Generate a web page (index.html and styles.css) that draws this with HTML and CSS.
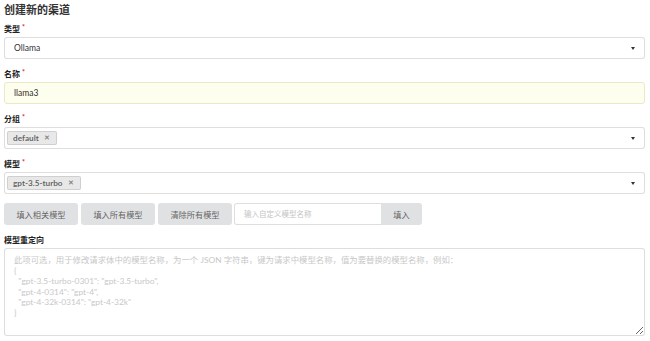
FILE: index.html
```
<!DOCTYPE html>
<html lang="zh-CN">
<head>
    <meta charset="UTF-8">
    <meta name="viewport" content="width=device-width, initial-scale=1.0">
    <title>创建新的渠道</title>
    <link rel="stylesheet" href="styles.css">
</head>
<body>
    <div class="channel-form">
        <h2 class="form-title">创建新的渠道</h2>

        <div class="field">
            <label class="field-label required">类型</label>
            <div class="dropdown">
                <span class="dropdown-text">Ollama</span>
                <i class="dropdown-icon"></i>
            </div>
        </div>

        <div class="field">
            <label class="field-label required">名称</label>
            <input class="text-input autofilled" type="text" value="llama3">
        </div>

        <div class="field">
            <label class="field-label required">分组</label>
            <div class="dropdown multiple">
                <span class="tag">default <i class="tag-remove">✕</i></span>
                <i class="dropdown-icon"></i>
            </div>
        </div>

        <div class="field">
            <label class="field-label required">模型</label>
            <div class="dropdown multiple">
                <span class="tag">gpt-3.5-turbo <i class="tag-remove">✕</i></span>
                <i class="dropdown-icon"></i>
            </div>
        </div>

        <div class="model-actions">
            <button class="btn">填入相关模型</button>
            <button class="btn">填入所有模型</button>
            <button class="btn">清除所有模型</button>
            <div class="action-input">
                <input type="text" placeholder="输入自定义模型名称">
                <button class="btn btn-attached">填入</button>
            </div>
        </div>

        <div class="field">
            <label class="field-label">模型重定向</label>
            <textarea class="mapping-input" placeholder='此项可选，用于修改请求体中的模型名称，为一个 JSON 字符串，键为请求中模型名称，值为要替换的模型名称，例如：&#10;{&#10;  "gpt-3.5-turbo-0301": "gpt-3.5-turbo",&#10;  "gpt-4-0314": "gpt-4",&#10;  "gpt-4-32k-0314": "gpt-4-32k"&#10;}'></textarea>
        </div>
    </div>
</body>
</html>
```

FILE: styles.css
```
* {
    margin: 0;
    padding: 0;
    box-sizing: border-box;
}

body {
    font-family: Lato, "Noto Sans CJK SC", sans-serif;
    background: white;
    color: rgba(0,0,0,0.87);
    padding: 1px 5px 0 4px;
}

.form-title {
    font-size: 11px;
    line-height: 17px;
    font-weight: bold;
    color: #333;
    margin-bottom: 7px;
}

.field {
    margin-bottom: 11px;
}

.field-label {
    display: block;
    font-size: 8px;
    line-height: 9px;
    height: 9px;
    font-weight: bold;
    color: #222;
    margin-bottom: 3px;
}

.field-label.required::after {
    content: "*";
    color: #db2828;
    font-size: 7px;
    line-height: 7px;
    margin-left: 2px;
    position: relative;
    top: -2px;
}

.dropdown {
    height: 22px;
    border: 1px solid rgba(34,36,38,0.15);
    border-radius: 3px;
    background: white;
    display: flex;
    align-items: center;
    padding: 0 9px;
    font-size: 8.5px;
    position: relative;
}

.dropdown.multiple {
    padding-left: 2px;
}

.dropdown-text {
    color: rgba(0,0,0,0.87);
}

.dropdown-icon {
    position: absolute;
    right: 9px;
    top: 9px;
    border-left: 2.5px solid transparent;
    border-right: 2.5px solid transparent;
    border-top: 3px solid #333;
}

.tag {
    display: inline-flex;
    align-items: center;
    height: 14px;
    padding: 0 7px 0 6px;
    background: #e8e8e8;
    border-radius: 2px;
    font-size: 8.2px;
    font-weight: bold;
    color: rgba(0,0,0,0.6);
    box-shadow: inset 0 0 0 1px rgba(34,36,38,0.12);
}

.tag-remove {
    font-style: normal;
    font-size: 6.5px;
    margin-left: 5px;
    color: rgba(0,0,0,0.45);
}

.text-input {
    display: block;
    width: 100%;
    height: 22px;
    border: 1px solid rgba(34,36,38,0.15);
    border-radius: 3px;
    padding: 0 9px;
    font-family: inherit;
    font-size: 8.5px;
    color: rgba(0,0,0,0.87);
    outline: none;
}

.text-input.autofilled {
    background: #fefeee;
    border-color: #ebe9c8;
}

.model-actions {
    display: flex;
    gap: 3px;
    margin-top: -2px;
    margin-bottom: 11px;
}

.btn {
    height: 22px;
    width: 74px;
    border: none;
    border-radius: 3px;
    background: #e0e1e2;
    color: rgba(0,0,0,0.6);
    font-family: inherit;
    font-size: 8.2px;
    cursor: pointer;
}

.action-input {
    display: flex;
    margin-left: -1px;
}

.action-input input {
    width: 147px;
    height: 22px;
    border: 1px solid rgba(34,36,38,0.15);
    border-right: none;
    border-radius: 3px 0 0 3px;
    padding: 0 9px;
    font-family: inherit;
    font-size: 7.5px;
    outline: none;
}

.action-input input::placeholder {
    color: #c4c4c4;
}

.btn-attached {
    width: 41px;
    border-radius: 0 3px 3px 0;
}

.mapping-input {
    display: block;
    width: 100%;
    height: 88px;
    border: 1px solid rgba(34,36,38,0.15);
    border-radius: 3px;
    padding: 6px 9px;
    font-family: Lato, "Noto Sans CJK SC", sans-serif;
    font-size: 8.4px;
    line-height: 10.5px;
    outline: none;
    resize: vertical;
}

.mapping-input::placeholder {
    color: #c8c8c8;
}
```
